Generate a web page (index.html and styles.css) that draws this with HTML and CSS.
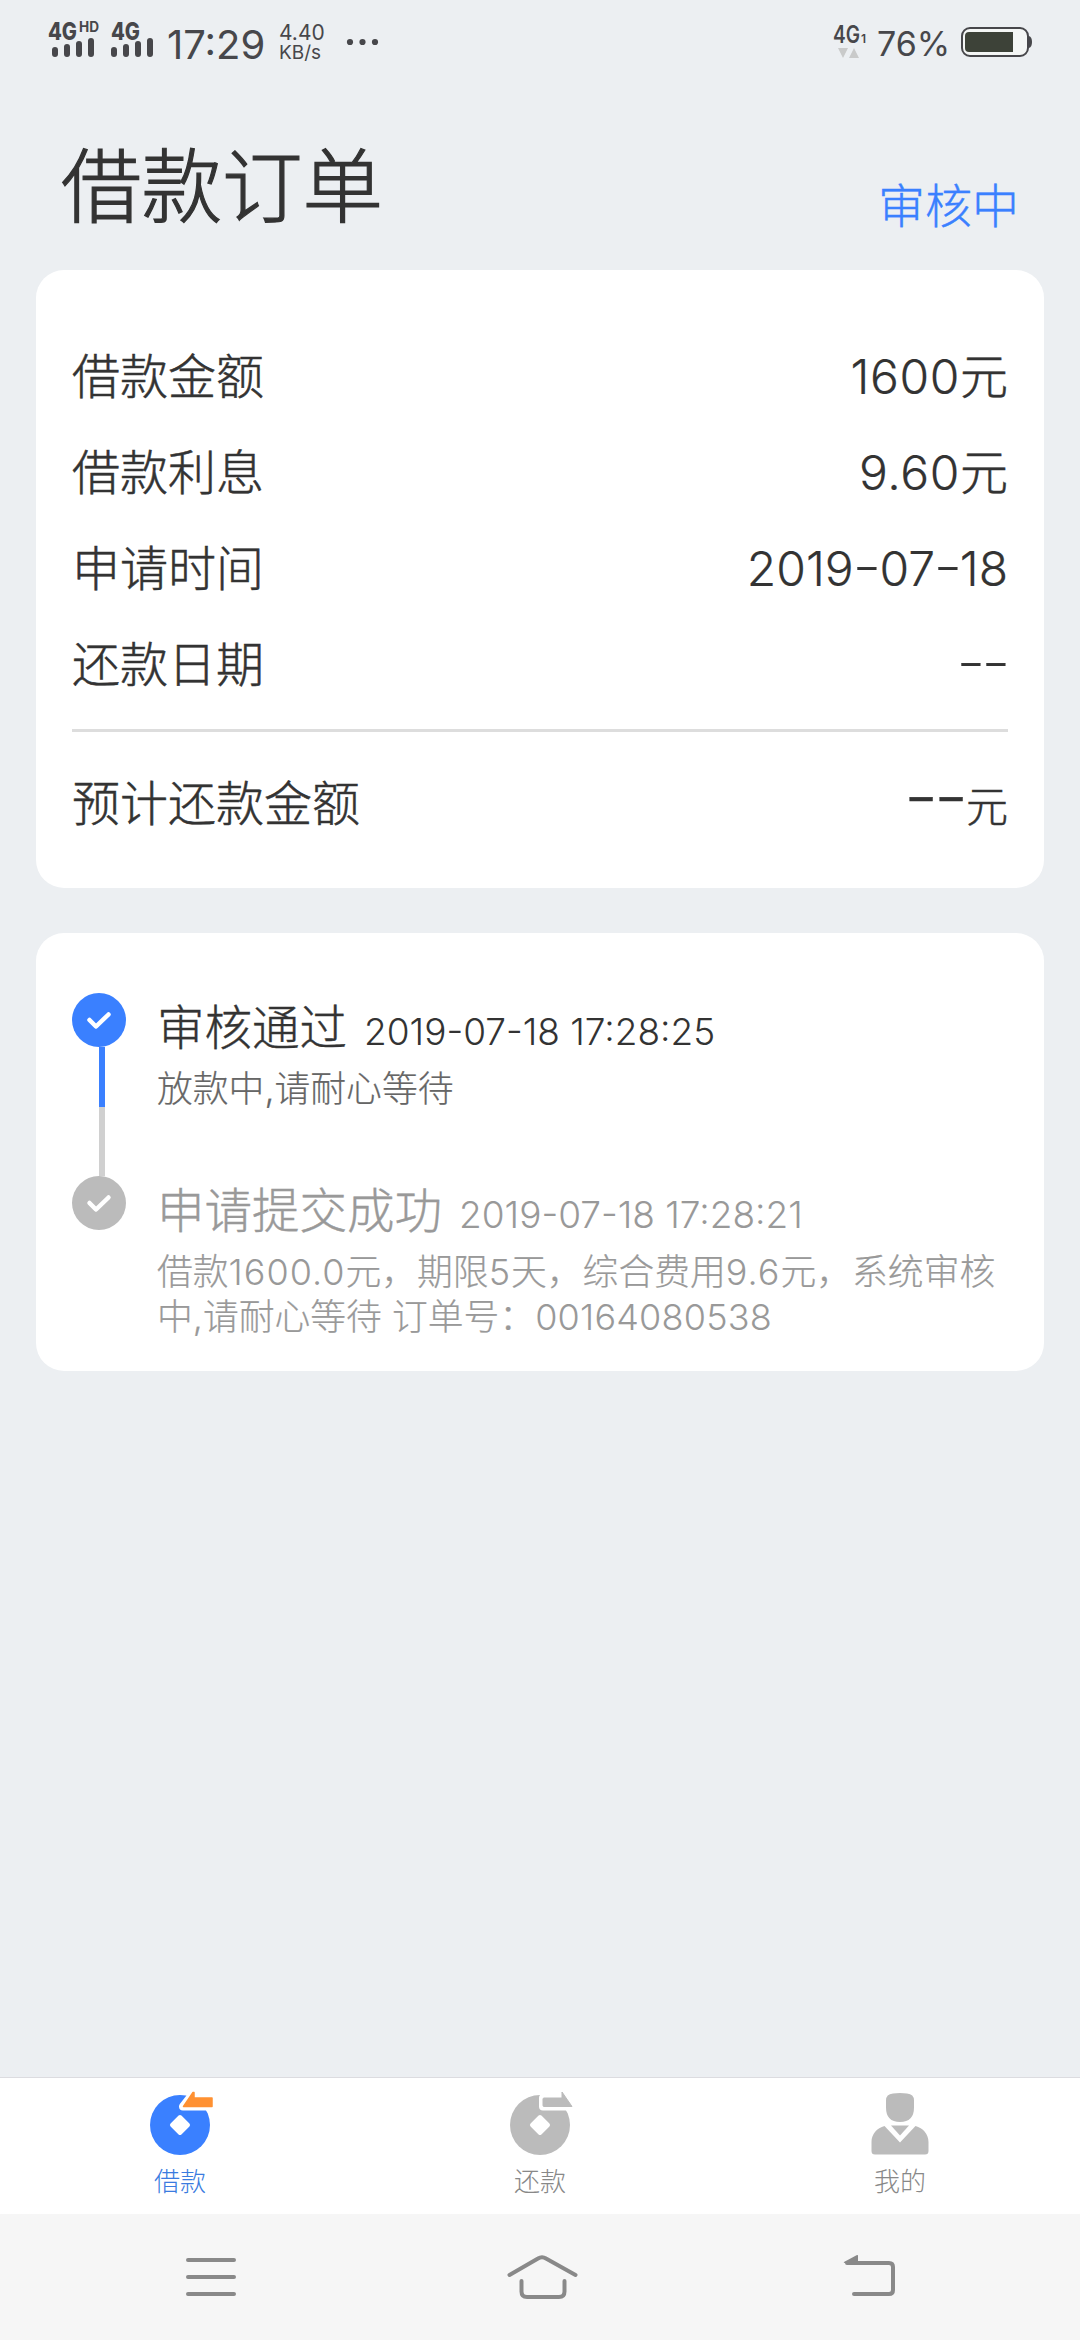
FILE: index.html
```html
<!DOCTYPE html>
<html lang="zh-CN">
<head>
<meta charset="utf-8">
<title>借款订单</title>
<link rel="stylesheet" href="styles.css">
</head>
<body>
<header class="status">
  <svg class="signal" width="56" height="44" viewBox="0 0 56 44">
    <text x="0" y="20.500" class="net" textLength="29" lengthAdjust="spacingAndGlyphs">4G</text>
    <text x="31" y="12.500" class="hd" textLength="20" lengthAdjust="spacingAndGlyphs">HD</text>
    <path d="M7 31v4M19 28v7M31 25v10M43 22v13" class="bars"/>
  </svg>
  <svg class="signal" width="50" height="44" viewBox="0 0 50 44">
    <text x="0" y="20.500" class="net" textLength="29" lengthAdjust="spacingAndGlyphs">4G</text>
    <path d="M3 31v4M15 28v7M27 25v10M39 22v13" class="bars"/>
  </svg>
  <time class="clock">17:29</time>
  <div class="speed"><span class="rate">4.40</span><span class="unit">KB/s</span></div>
  <svg class="dots" width="34" height="8" viewBox="0 0 34 8"><circle cx="4" cy="4" r="3.100"/><circle cx="16.500" cy="4" r="3.100"/><circle cx="29" cy="4" r="3.100"/></svg>
  <svg class="data" width="34" height="40" viewBox="0 0 34 40">
    <text x="0" y="21" class="net4" textLength="27" lengthAdjust="spacingAndGlyphs">4G</text>
    <text x="28" y="21" class="sub">1</text>
    <path d="M5 26h10l-5 10zM16 36h10l-5-10z" fill="#c9caca"/>
  </svg>
  <span class="percent">76%</span>
  <svg class="battery" width="74" height="32" viewBox="0 0 74 32">
    <rect x="2" y="2" width="66" height="28" rx="8" fill="#f4f6f5" stroke="#47474b" stroke-width="2"/>
    <path d="M9 6h44v20H9a4 4 0 0 1-4-4V10a4 4 0 0 1 4-4z" fill="#3d4238"/>
    <path d="M69 10q3 1 3 6t-3 6z" fill="#47474b"/>
  </svg>
</header>

<main class="page">
  <div class="heading">
    <h1 class="title">借款订单</h1>
    <span class="state">审核中</span>
  </div>

  <section class="card summary">
    <div class="row"><span>借款金额</span><span><span class="num">1600</span>元</span></div>
    <div class="row"><span>借款利息</span><span><span class="num">9.60</span>元</span></div>
    <div class="row"><span>申请时间</span><span class="num date">2019<i class="hy">-</i>07<i class="hy">-</i>18</span></div>
    <div class="row"><span>还款日期</span><span class="num date"><i class="hy">-</i><i class="hy">-</i></span></div>
    <div class="row total"><span>预计还款金额</span><span class="sum"><span class="blank"><i class="hy">-</i><i class="hy">-</i></span>元</span></div>
  </section>

  <section class="card timeline">
    <div class="step">
      <div class="rail">
        <svg class="mark" width="54" height="54" viewBox="0 0 54 54"><circle cx="27" cy="27" r="27" fill="#3a80ff"/><path d="M17.500 27l6.500 6.500L36.500 21.500" class="tick"/></svg>
        <i class="line line-on"></i><i class="line line-off"></i>
      </div>
      <div class="body">
        <div class="head"><span class="name">审核通过</span><time class="when">2019-07-18 17:28:25</time></div>
        <p class="note">放款中,请耐心等待</p>
      </div>
    </div>
    <div class="step past">
      <div class="rail">
        <svg class="mark" width="54" height="54" viewBox="0 0 54 54"><circle cx="27" cy="27" r="27" fill="#bbb"/><path d="M17.500 27l6.500 6.500L36.500 21.500" class="tick"/></svg>
      </div>
      <div class="body">
        <div class="head"><span class="name">申请提交成功</span><time class="when">2019-07-18 17:28:21</time></div>
        <p class="note">借款<span class="n dec">1600.0</span>元，期限<span class="n dec">5</span>天，综合费用<span class="n dec">9.6</span>元，系统审核<br>中,请耐心等待 订单号：<span class="n">00164080538</span></p>
      </div>
    </div>
  </section>
</main>

<nav class="tabs">
  <a class="tab active">
    <svg width="66" height="66" viewBox="0 0 66 66">
      <circle cx="33" cy="35" r="30" fill="#3a80ff"/>
      <path d="M36 16.500L46.500 3h3.500v6h17v7.500z" fill="#fff" stroke="#fff" stroke-width="8" stroke-linejoin="round"/>
      <path d="M36.500 16.500L46 2.500h1V8h18v8.500z" fill="#ff9132" stroke="#ff9132" stroke-width="1.500" stroke-linejoin="round"/>
      <path d="M33 27l8 8-8 8-8-8z" fill="#fff" stroke="#fff" stroke-width="4" stroke-linejoin="round"/>
    </svg>
    <span>借款</span>
  </a>
  <a class="tab">
    <svg width="66" height="66" viewBox="0 0 66 66">
      <circle cx="33" cy="35" r="30" fill="#bbb"/>
      <path d="M36 8h19V2l11 14.500H36z" fill="#fff" stroke="#fff" stroke-width="8" stroke-linejoin="round"/>
      <path d="M37 8h18V2l10 14.500H37q-1 0-1-1V9q0-1 1-1z" fill="#bbb" stroke="#bbb" stroke-width="1" stroke-linejoin="round"/>
      <path d="M33 27l8 8-8 8-8-8z" fill="#fff" stroke="#fff" stroke-width="4" stroke-linejoin="round"/>
    </svg>
    <span>还款</span>
  </a>
  <a class="tab">
    <svg width="66" height="66" viewBox="0 0 66 66" fill="#bbb">
      <path d="M26 3.500q7-1 14 0 7 .5 7 7v7Q47 32 33 32T19 17.500v-7q0-6.500 7-7z"/>
      <path d="M17.500 36L33 52.500 48.500 36C56 38 61.500 44 61.500 52v9q0 3.500-3.500 3.500H8q-3.500 0-3.500-3.500v-9c0-8 5.500-14 13-16z"/>
      <path d="M24 35.500h18L33 45.500z"/>
    </svg>
    <span>我的</span>
  </a>
</nav>

<footer class="keys">
  <svg width="54" height="48" viewBox="0 0 54 48"><path d="M4 7h46M4 24h46M4 41h46"/></svg>
  <svg class="home" width="76" height="50" viewBox="0 0 76 50"><path d="M5.500 25L34 8.500q4-2.500 8 0L71.500 25M17.500 31v10.500q0 5.500 5.500 5.500h32q5.500 0 5.500-5.500V31"/></svg>
  <svg width="56" height="48" viewBox="0 0 56 48"><path d="M6 10h42q4 0 4 4v23q0 4-4 4H13"/><path d="M3 9L16 2q1-.5 1 1v7H4q-2 0-1-1z" fill="#898989" stroke="none"/></svg>
</footer>
</body>
</html>
```

FILE: styles.css
```css
* { box-sizing: border-box; }

body {
  margin: 0;
  width: 1080px;
  height: 2340px;
  display: flex;
  flex-direction: column;
  background: #eceff2;
  color: #333;
  font-family: Inter, "Noto Sans CJK SC", sans-serif;
  font-weight: 300;
}

h1, p { margin: 0; font-weight: 300; }
svg { display: block; flex: none; overflow: visible; }

/* Status bar */
.status {
  height: 84px;
  padding: 0 46px 0 48px;
  display: flex;
  align-items: center;
  color: #47474b;
  font-weight: 400;
}
.signal { margin-top: -2px; margin-right: 7px; }
.signal + .signal { margin-right: 6px; }
.net { font: 800 24px Inter, sans-serif; fill: #47474b; }
.hd { font: 700 14px Inter, sans-serif; fill: #47474b; }
.net4 { font: 600 24px Inter, sans-serif; fill: #47474b; }
.sub { font: 600 12px Inter, sans-serif; fill: #47474b; }
.bars { stroke: #47474b; stroke-width: 6; stroke-linecap: round; fill: none; }
.clock { font-size: 40px; width: 112px; margin-top: 4px; }
.speed { display: flex; flex-direction: column; width: 66px; margin-top: 2px; }
.rate { font-size: 21px; line-height: 20px; }
.unit { font-size: 19px; line-height: 20px; }
.dots { fill: #47474b; margin-left: 1px; }
.data { margin-left: auto; }
.percent { font-size: 34px; margin: 3px 0 0 10px; width: 83px; }

/* Page */
.page { flex: 1; padding: 0 36px; }
.heading {
  height: 186px;
  padding: 0 25px 0 25px;
  display: flex;
  justify-content: space-between;
  align-items: flex-start;
}
.title {
  font-size: 80.5px;
  line-height: 110px;
  padding-top: 48px;
  -webkit-text-stroke: 1.2px currentColor;
}
.state {
  font-size: 47px;
  line-height: 60px;
  padding-top: 92px;
  color: #3a80ff;
  -webkit-text-stroke: .4px currentColor;
}

.card { background: #fff; border-radius: 28px; padding: 0 36px; }
.summary { height: 618px; padding-top: 59px; }
.row {
  height: 96px;
  display: flex;
  justify-content: space-between;
  align-items: center;
  font-size: 48px;
  line-height: 60px;
  -webkit-text-stroke: .5px currentColor;
}
.num {
  font-size: 48px;
  letter-spacing: .6px;
  font-feature-settings: "case";
  -webkit-text-stroke: .2px currentColor;
}
.date { letter-spacing: 0; }
.hy { display: inline-block; font-style: normal; letter-spacing: 0; transform: scaleX(1.3); margin: 0 2px; }
.date .hy:last-child { margin-right: 1px; }
.total { height: 146px; margin-top: 16px; border-top: 3px solid #ddd; }
.sum { font-size: 42px; }
.blank { font-size: 62px; line-height: 60px; font-feature-settings: "case"; }
.blank .hy { transform: scaleX(1.2); margin: 0 1px; }

/* Timeline */
.timeline { height: 438px; padding-top: 60px; margin-top: 45px; }
.step { display: flex; gap: 31px; height: 183px; }
.rail { width: 54px; flex: none; }
.line { display: block; width: 6px; margin-left: 27px; }
.line-on { height: 60px; background: #3a80ff; }
.line-off { height: 69px; background: #d0d0d0; }
.tick { fill: none; stroke: #fff; stroke-width: 4.5; stroke-linecap: round; stroke-linejoin: round; }
.head { display: flex; align-items: baseline; gap: 17px; height: 74px; white-space: nowrap; }
.name { font-size: 47.5px; line-height: 70px; -webkit-text-stroke: .4px currentColor; }
.when { font-size: 37px; font-feature-settings: "case"; }
.note {
  font-size: 35.8px;
  line-height: 45px;
  color: #666;
  white-space: nowrap;
  -webkit-text-stroke: .2px currentColor;
}
.n { font-size: 36px; letter-spacing: .2px; -webkit-text-stroke: 0; }
.dec { letter-spacing: 1px; }
.past, .past .note { color: #999; }

/* Tab bar */
.tabs {
  height: 137px;
  flex: none;
  display: grid;
  grid-template-columns: repeat(3, 1fr);
  background: #fff;
  border-top: 1px solid #dcdce0;
}
.tab {
  display: flex;
  flex-direction: column;
  align-items: center;
  padding-top: 12px;
  gap: 9px;
  font-size: 26px;
  line-height: 34px;
  color: #888;
}
.active { color: #3a7be0; }

/* System keys */
.keys {
  height: 126px;
  flex: none;
  display: flex;
  justify-content: space-between;
  align-items: center;
  padding: 0 183px 0 184px;
  background: #f6f6f6;
}
.keys svg { fill: none; stroke: #898989; stroke-width: 4; stroke-linecap: round; }
.keys .home { margin: -4px 0 0 4px; }
```
